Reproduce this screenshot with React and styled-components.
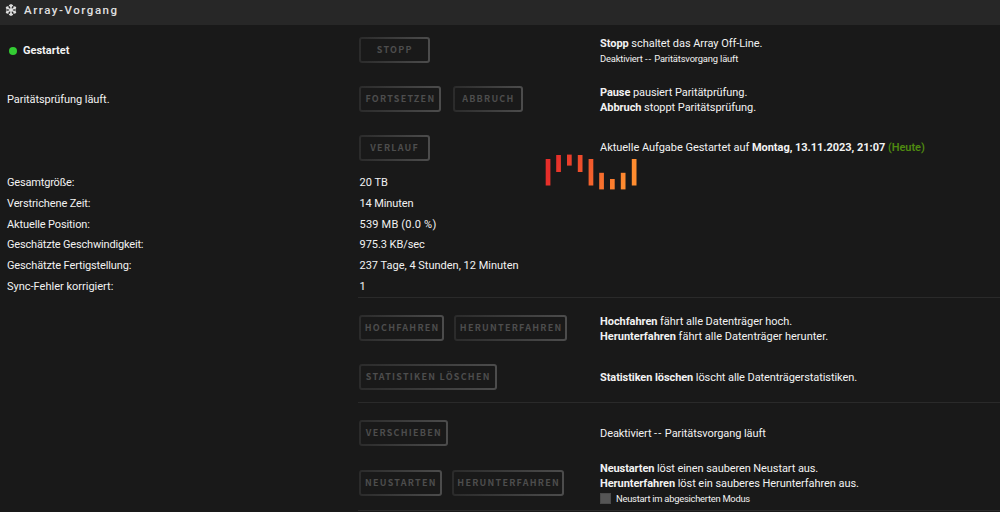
import React from 'react';
import styled, {createGlobalStyle} from 'styled-components';
import {FaSnowflake} from 'react-icons/fa';

const GlobalStyle = createGlobalStyle`
    * {
        box-sizing: border-box;
    }

    body {
        margin: 0;
        background-color: #191818;
        color: #f2f2f2;
        font-family: Roboto, 'Noto Sans', sans-serif;
        font-size: 11px;
        overflow: hidden;
    }
`;

const Page = styled.main`
    position: relative;
    height: 512px;
    overflow: hidden;
    background-color: #191919;
`;

const TitleBar = styled.header`
    display: flex;
    align-items: center;
    height: 25px;
    padding: 0 0 6px 5px;
    gap: 7px;
    background-color: #272727;
    color: #e0e0e0;
    font-size: 11.5px;
    font-weight: 500;
    letter-spacing: 1.55px;
    white-space: nowrap;
`;

const Row = styled.section`
    display: grid;
    grid-template-columns: 352.5px 240.5px 1fr;
    align-items: center;
    align-content: center;
    height: ${props => props.$height}px;
    margin-bottom: ${props => props.$space || 0}px;
    padding-left: 7px;
`;

const Status = styled.div`
    display: flex;
    align-items: center;
    gap: 6px;
    padding-left: 2px;
    font-weight: 700;
`;

const Dot = styled.span`
    width: 8px;
    height: 8px;
    margin-top: 1px;
    border-radius: 50%;
    background-color: #33cc33;
`;

const Lines = styled.div`
    padding-top: 2px;
`;

const Text = styled.div`
    display: flex;
    align-items: center;
    height: 15px;
    line-height: 15px;
    white-space: pre;
    font-size: ${props => (props.$small ? '9.4px' : 'inherit')};
    letter-spacing: ${props => props.$track || 0}px;
`;

const Dashes = styled.span`
    letter-spacing: 1px;
`;

const Today = styled.span`
    color: #4f8a10;
    font-weight: 600;
`;

const Buttons = styled.div`
    display: flex;
    gap: ${props => props.$gap || 10}px;
    margin-left: -0.6px;
`;

const Button = styled.button`
    display: flex;
    align-items: center;
    justify-content: center;
    width: ${props => props.$width}px;
    height: 26px;
    padding: 0 0 1px 1px;
    border: 2px solid transparent;
    border-radius: 3px;
    background: linear-gradient(#191919, #191919) padding-box, linear-gradient(90deg, #2b2b2b, #4c4c4c) border-box;
    color: #4d4d4d;
    font-family: 'Noto Sans CJK SC', 'Noto Sans', sans-serif;
    font-size: 9px;
    font-weight: 700;
    letter-spacing: 1.25px;
    white-space: nowrap;
`;

const Divider = styled.hr`
    height: 1px;
    margin: 0 0 0 358px;
    border: 0;
    background-color: #2a2a2a;
`;

const Checkbox = styled.span`
    width: 11px;
    height: 11px;
    margin-right: 5px;
    border: 1px solid #4a4a4a;
    background-color: #555;
`;

const Loader = styled.svg`
    position: absolute;
    left: 545px;
    top: 154px;
`;

const stats = [
    {label: 'Gesamtgröße:', track: -0.18, value: '20 TB'},
    {label: 'Verstrichene Zeit:', track: -0.12, value: '14 Minuten', valueTrack: -0.1},
    {label: 'Aktuelle Position:', track: -0.12, value: '539 MB (0.0 %)', valueTrack: 0.2},
    {label: 'Geschätzte Geschwindigkeit:', track: -0.18, value: '975.3 KB/sec', valueTrack: -0.05},
    {label: 'Geschätzte Fertigstellung:', track: -0.13, value: '237 Tage, 4 Stunden, 12 Minuten'},
    {label: 'Sync-Fehler korrigiert:', value: '1'},
];

const bars = [
    {x: 0.7, y: 5, h: 26.5},
    {x: 11.2, y: 1, h: 17},
    {x: 22, y: 0.6, h: 11},
    {x: 32.8, y: 1, h: 17},
    {x: 43.6, y: 5, h: 26.5},
    {x: 54.2, y: 18.8, h: 16.6},
    {x: 65, y: 25, h: 10.4},
    {x: 75.8, y: 18.8, h: 16.6},
    {x: 86.8, y: 5, h: 26.5},
];

const WaveLoader = () => (
    <Loader width='93' height='36'>
        <defs>
            <linearGradient id='wave' gradientUnits='userSpaceOnUse' x1='12' y1='0' x2='80' y2='28'>
                <stop offset='0' stopColor='#e62d2a'/>
                <stop offset='1' stopColor='#ff8c2f'/>
            </linearGradient>
        </defs>
        {bars.map(bar => (
            <rect key={bar.x} x={bar.x} y={bar.y} width='4.7' height={bar.h} fill='url(#wave)'/>
        ))}
    </Loader>
);

const App = () => {
    return (
        <>
            <GlobalStyle/>
            <Page>
                <TitleBar><FaSnowflake size={12}/>Array-Vorgang</TitleBar>
                <Row $height={50}>
                    <Status><Dot/><Text>Gestartet</Text></Status>
                    <Buttons><Button $width={70.6}>STOPP</Button></Buttons>
                    <Lines>
                        <Text $track={-0.05}><b>Stopp</b> schaltet das Array Off-Line.</Text>
                        <Text $small $track={-0.17}>Deaktiviert <Dashes>--</Dashes> Paritätsvorgang läuft</Text>
                    </Lines>
                </Row>
                <Row $height={48}>
                    <Text $track={-0.07}>Paritätsprüfung läuft.</Text>
                    <Buttons $gap={12}>
                        <Button $width={82}>FORTSETZEN</Button>
                        <Button $width={70}>ABBRUCH</Button>
                    </Buttons>
                    <Lines>
                        <Text $track={-0.08}><b>Pause</b> pausiert Paritätprüfung.</Text>
                        <Text $track={-0.06}><b>Abbruch</b> stoppt Paritätsprüfung.</Text>
                    </Lines>
                </Row>
                <Row $height={49}>
                    <span/>
                    <Buttons><Button $width={70.6}>VERLAUF</Button></Buttons>
                    <Text $track={-0.03}><span>Aktuelle Aufgabe Gestartet auf </span><b>Montag, 13.11.2023, 21:07 </b><Today>(Heute)</Today></Text>
                </Row>
                {stats.map(stat => (
                    <Row key={stat.label} $height={20.83}>
                        <Text $track={stat.track}>{stat.label}</Text>
                        <Text $track={stat.valueTrack}>{stat.value}</Text>
                    </Row>
                ))}
                <Divider/>
                <Row $height={61}>
                    <span/>
                    <Buttons>
                        <Button $width={85.5}>HOCHFAHREN</Button>
                        <Button $width={112.5}>HERUNTERFAHREN</Button>
                    </Buttons>
                    <Lines>
                        <Text $track={-0.05}><b>Hochfahren</b> fährt alle Datenträger hoch.</Text>
                        <Text><b>Herunterfahren</b> fährt alle Datenträger herunter.</Text>
                    </Lines>
                </Row>
                <Row $height={37} $space={6}>
                    <span/>
                    <Buttons><Button $width={137.6}>STATISTIKEN LÖSCHEN</Button></Buttons>
                    <Text $track={-0.08}><b>Statistiken löschen</b> löscht alle Datenträgerstatistiken.</Text>
                </Row>
                <Divider/>
                <Row $height={61}>
                    <span/>
                    <Buttons><Button $width={89}>VERSCHIEBEN</Button></Buttons>
                    <Text $track={-0.08}>Deaktiviert <Dashes>--</Dashes> Paritätsvorgang läuft</Text>
                </Row>
                <Row $height={39} $space={7}>
                    <span/>
                    <Buttons>
                        <Button $width={83}>NEUSTARTEN</Button>
                        <Button $width={112.5}>HERUNTERFAHREN</Button>
                    </Buttons>
                    <div>
                        <Text $track={-0.09}><b>Neustarten</b> löst einen sauberen Neustart aus.</Text>
                        <Text $track={-0.06}><b>Herunterfahren</b> löst ein sauberes Herunterfahren aus.</Text>
                        <Text $small $track={-0.26}><Checkbox/>Neustart im abgesicherten Modus</Text>
                    </div>
                </Row>
                <Divider/>
                <WaveLoader/>
            </Page>
        </>
    );
};

export default App;
